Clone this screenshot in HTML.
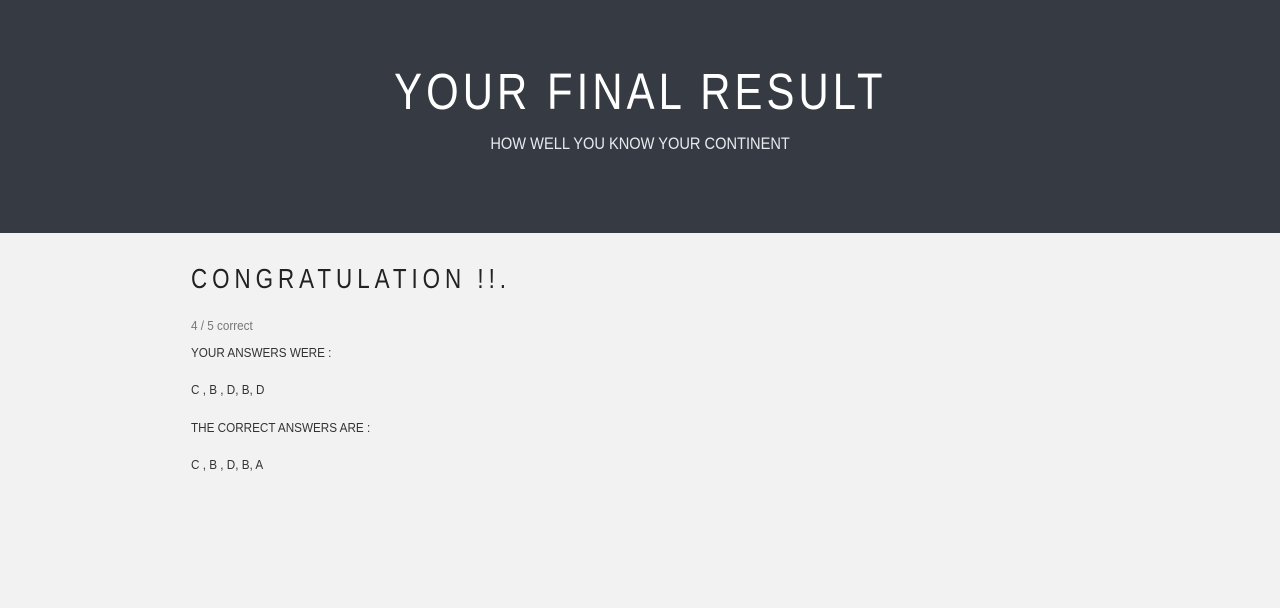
<!DOCTYPE html>
<html><head><style>
html,body{margin:0;padding:0;width:1280px;height:608px;overflow:hidden;background:#f2f2f2;font-family:"Liberation Sans",sans-serif;}
.hd{position:absolute;left:0;top:0;width:1280px;height:233px;background:#363a42;}
.t{position:absolute;left:0;width:1280px;text-align:center;color:#fff;}
.t span{display:inline-block;transform-origin:center;}
.t1{top:62px;font-size:51px;letter-spacing:5px;}
.t1 span{transform:scaleX(0.82);}
.t2{top:134px;font-size:17px;color:#e6e9ee;}
.t2 span{transform:scaleX(0.86);}
.c{position:absolute;left:191px;color:#333;transform-origin:left center;white-space:nowrap;}
.h{top:263px;font-size:28px;letter-spacing:6.2px;color:#222;transform:scaleX(0.8);}
.s{font-size:13px;transform:scaleX(0.9);}
</style></head><body>
<div class="hd"></div>
<div class="t t1"><span>YOUR FINAL RESULT</span></div>
<div class="t t2"><span>HOW WELL YOU KNOW YOUR CONTINENT</span></div>
<div class="c h">CONGRATULATION !!.</div>
<div class="c s" style="top:318px;color:#777">4 / 5 correct</div>
<div class="c s" style="top:345px">YOUR ANSWERS WERE :</div>
<div class="c s" style="top:382px">C , B , D, B, D</div>
<div class="c s" style="top:420px">THE CORRECT ANSWERS ARE :</div>
<div class="c s" style="top:457px">C , B , D, B, A</div>
</body></html>
